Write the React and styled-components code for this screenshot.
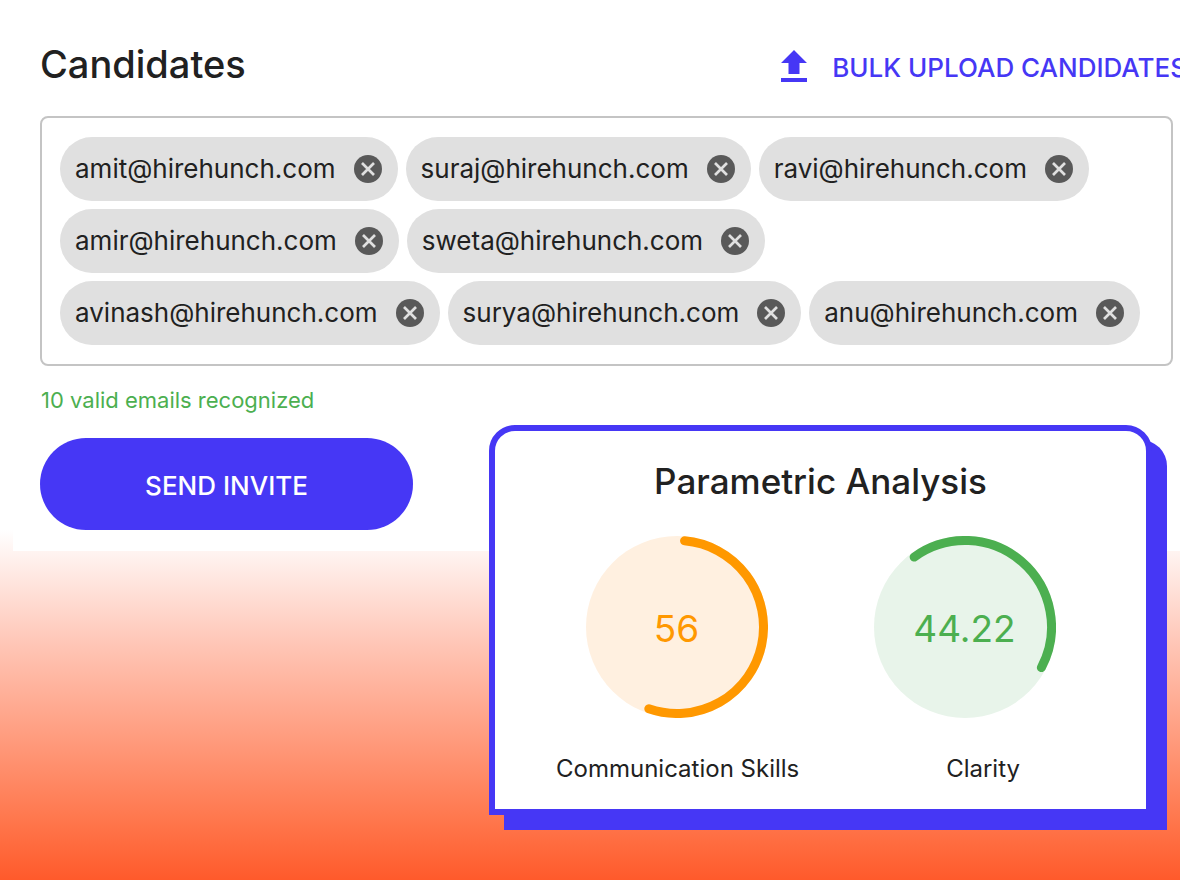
import React from "react";
import styled, { createGlobalStyle } from "styled-components";

const GlobalStyle = createGlobalStyle`
  *, *::before, *::after { box-sizing: border-box; }
  body {
    margin: 0;
    background: #fff;
    color: #212121;
    font-family: Inter, "Liberation Sans", sans-serif;
  }
  h1, h2, p, ul { margin: 0; padding: 0; }
  button { font: inherit; border: 0; cursor: pointer; }
`;

const Page = styled.div`
  display: flex;
  flex-direction: column;
  min-height: 100vh;
  overflow: hidden;
  background: linear-gradient(to top, #ff5a2b 0, #ff7449 54px, #ffc5b5 234px, #fff 350px);
`;

const Panel = styled.main`
  margin-left: 13px;
  padding: 40px 7px 21px 27px;
  background: #fff;
`;

const Header = styled.header`
  display: flex;
  justify-content: space-between;
  align-items: center;
  height: 52px;
  margin: 0 -14px 24px 0;
`;

const Title = styled.h1`
  padding-bottom: 4px;
  font-size: 38px;
  line-height: 48px;
  font-weight: 500;
`;

const UploadButton = styled.button`
  display: flex;
  align-items: center;
  gap: 24px;
  padding: 0;
  background: none;
  color: #4637f5;
  font-size: 26px;
  line-height: 32px;
  font-weight: 500;
  white-space: nowrap;

  span { padding-top: 4px; }
`;

const EmailBox = styled.ul`
  display: flex;
  flex-wrap: wrap;
  gap: 8px;
  padding: 19px 28px 19px 18px;
  border: 2px solid #c4c4c4;
  border-radius: 8px;
  list-style: none;
`;

const Chip = styled.li`
  display: flex;
  align-items: center;
  gap: 18px;
  height: 64px;
  padding: 0 16px 0 15px;
  border-radius: 32px;
  background: #e0e0e0;
  font-size: 26px;
  line-height: 32px;
`;

const RemoveButton = styled.button`
  display: flex;
  padding: 0;
  background: none;
`;

const Hint = styled.p`
  margin-top: 18px;
  padding-left: 1px;
  color: #4caf50;
  font-size: 22px;
  line-height: 32px;
`;

const SendButton = styled.button`
  display: block;
  width: 373px;
  height: 92px;
  margin-top: 22px;
  padding: 4px 0 0;
  border-radius: 46px;
  background: #4637f5;
  color: #fff;
  font-size: 26px;
  line-height: 32px;
  font-weight: 500;
`;

const Card = styled.section`
  align-self: flex-end;
  width: 663px;
  max-width: 100%;
  margin: -126px 28px 64px 0;
  padding: 28px 0 24px;
  border: 6px solid #4637f5;
  border-radius: 26px 26px 0 0;
  background: #fff;
  box-shadow: 15px 15px 0 #4637f5;
`;

const CardTitle = styled.h2`
  font-size: 35px;
  line-height: 44px;
  font-weight: 500;
  text-align: center;
`;

const Dials = styled.div`
  display: flex;
  justify-content: center;
  gap: 106px;
  margin-top: 33px;
`;

const Dial = styled.div`
  display: grid;
  place-items: center;
  color: ${(p) => p.$color};
  font-size: 37px;
  line-height: 48px;

  > * { grid-area: 1 / 1; }
  > span { padding-top: 4px; }
`;

const Labels = styled.div`
  display: flex;
  justify-content: space-between;
  margin-top: 35px;
  padding: 0 126px 0 61px;
  font-size: 24px;
  line-height: 32px;
  white-space: nowrap;
`;

const emails = ["amit", "suraj", "ravi", "amir", "sweta", "avinash", "surya", "anu"].map(
  (name) => `${name}@hirehunch.com`
);

const meters = [
  { id: "communication", label: "Communication Skills", value: "56", color: "#ff9800", tint: "#fff0e0", from: 5, to: 199 },
  { id: "clarity", label: "Clarity", value: "44.22", color: "#4caf50", tint: "#e8f4ea", from: -36, to: 118 },
];

function point(angle) {
  const a = (angle * Math.PI) / 180;
  return `${91 + 86.5 * Math.sin(a)} ${91 - 86.5 * Math.cos(a)}`;
}

function Ring({ color, tint, from, to }) {
  return (
    <svg width="182" height="182" viewBox="0 0 182 182" aria-hidden="true">
      <circle cx="91" cy="91" r="91" fill={tint} />
      <path
        d={`M${point(from)}A86.5 86.5 0 ${to - from > 180 ? 1 : 0} 1 ${point(to)}`}
        fill="none"
        stroke={color}
        strokeWidth="9"
        strokeLinecap="round"
      />
    </svg>
  );
}

function UploadIcon() {
  return (
    <svg width="28" height="32" viewBox="0 0 28 32" fill="currentColor" aria-hidden="true">
      <path d="M14 0L27 13H19.500V24H8.500V13H1ZM1 28H27V32H1Z" />
    </svg>
  );
}

function CancelIcon() {
  return (
    <svg width="28" height="28" viewBox="0 0 28 28" aria-hidden="true">
      <circle cx="14" cy="14" r="14" fill="#595959" />
      <path d="M8 8L20 20M20 8L8 20" stroke="#e0e0e0" strokeWidth="2.700" />
    </svg>
  );
}

export default function App() {
  return (
    <>
      <GlobalStyle />
      <Page>
        <Panel>
          <Header>
            <Title>Candidates</Title>
            <UploadButton type="button">
              <UploadIcon />
              <span>BULK UPLOAD CANDIDATES</span>
            </UploadButton>
          </Header>
          <EmailBox>
            {emails.map((email) => (
              <Chip key={email}>
                {email}
                <RemoveButton type="button" aria-label={`Remove ${email}`}>
                  <CancelIcon />
                </RemoveButton>
              </Chip>
            ))}
          </EmailBox>
          <Hint>10 valid emails recognized</Hint>
          <SendButton type="button">SEND INVITE</SendButton>
        </Panel>
        <Card>
          <CardTitle>Parametric Analysis</CardTitle>
          <Dials>
            {meters.map((m) => (
              <Dial key={m.id} $color={m.color} role="group" aria-labelledby={m.id}>
                <Ring color={m.color} tint={m.tint} from={m.from} to={m.to} />
                <span>{m.value}</span>
              </Dial>
            ))}
          </Dials>
          <Labels>
            {meters.map((m) => (
              <span key={m.id} id={m.id}>{m.label}</span>
            ))}
          </Labels>
        </Card>
      </Page>
    </>
  );
}
